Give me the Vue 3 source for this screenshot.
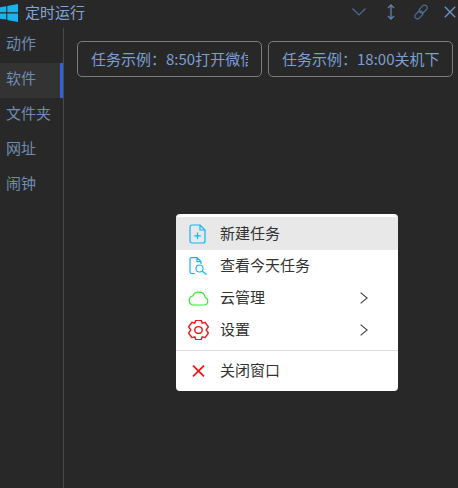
<template>
  <div class="window">
    <header class="titlebar">
      <svg class="logo" width="18" height="18" viewBox="0 0 18 18">
        <path d="M0 3.2 L6.2 2.3 V8.3 H0 Z M7.3 2.1 L18 0 V8.3 H7.3 Z M0 9.4 H6.2 V15.6 L0 14.8 Z M7.3 9.4 H18 V18 L7.3 15.9 Z" fill="#19b4f0" />
      </svg>
      <span class="title">定时运行</span>
      <div class="controls">
        <svg class="ctl chevron" width="14" height="8" viewBox="0 0 14 8" fill="none" stroke="#4f6c94" stroke-width="1.1">
          <path d="M0.5 0.5 L7 7 L13.5 0.5" />
        </svg>
        <svg class="ctl updown" width="8" height="16" viewBox="0 0 8 16" fill="none" stroke="#5f80ac" stroke-width="1.3">
          <path d="M4 1 V15 M1 4 L4 1 L7 4 M1 12 L4 15 L7 12" />
        </svg>
        <svg class="ctl link" width="16" height="16" viewBox="0 0 16 16" fill="none" stroke="#4f6c94" stroke-width="1.2">
          <rect x="7.6" y="0.6" width="5.2" height="9" rx="2.6" transform="rotate(45 10.2 5.1)" />
          <rect x="3.2" y="6.4" width="5.2" height="9" rx="2.6" transform="rotate(45 5.8 10.9)" />
        </svg>
        <svg class="ctl close" width="12" height="12" viewBox="0 0 12 12" fill="none" stroke="#6a8dbc" stroke-width="1.5">
          <path d="M0.8 0.8 L11.2 11.2 M11.2 0.8 L0.8 11.2" />
        </svg>
      </div>
    </header>

    <div class="body">
      <nav class="sidebar">
        <div
          v-for="item in navItems"
          :key="item"
          class="nav-item"
          :class="{ active: item === '软件' }"
        >{{ item }}</div>
      </nav>
      <main class="content">
        <div class="task-btn first"><span>任务示例：8:50打开微信</span></div>
        <div class="task-btn"><span>任务示例：18:00关机下</span></div>
      </main>
    </div>

    <!-- 右键菜单 -->
    <div class="menu">
      <div class="menu-row hover">
        <svg width="21" height="20" viewBox="0 0 21 20" fill="none" stroke="#12b5f5" stroke-width="1.2">
          <path d="M4 1 H12 L17 6 V17 A2 2 0 0 1 15 19 H4 A2 2 0 0 1 2 17 V3 A2 2 0 0 1 4 1 Z M12 1 V6 H17 M9.5 8.5 V15 M6.2 11.8 H12.8" />
        </svg>
        <span>新建任务</span>
      </div>
      <div class="menu-row">
        <svg width="21" height="18" viewBox="0 0 21 18" fill="none" stroke="#12b5f5" stroke-width="1.2">
          <path d="M7 16.5 H3.5 A1.5 1.5 0 0 1 2 15 V2 A1.5 1.5 0 0 1 3.5 0.6 H9 L13 4.6 V7 M9 0.6 V4.6 H13" />
          <circle cx="11.5" cy="11.5" r="3.5" />
          <path d="M14 14 L18.5 17.5" />
        </svg>
        <span>查看今天任务</span>
      </div>
      <div class="menu-row">
        <svg width="21" height="15" viewBox="0 0 21 15" fill="none" stroke="#2ff02f" stroke-width="1.2">
          <path d="M5 14 H16 A4 4 0 0 0 17 6.2 A6.2 5.6 0 0 0 5 4.8 A4.7 4.7 0 0 0 5 14 Z" />
        </svg>
        <span>云管理</span>
        <svg class="arrow" width="8" height="12" viewBox="0 0 8 12" fill="none" stroke="#444" stroke-width="1.2">
          <path d="M0.6 0.6 L7.2 6 L0.6 11.4" />
        </svg>
      </div>
      <div class="menu-row">
        <svg width="21" height="20" viewBox="1.5 1.2 17 17.6" preserveAspectRatio="none" fill="none" stroke="#f01818" stroke-width="1.2">
          <path d="M7.8 1.5 H12.2 L13 4 L15.3 3.2 L18 7.3 L16.2 9.9 L18 12.7 L15.3 16.8 L13 16 L12.2 18.5 H7.8 L7 16 L4.7 16.8 L2 12.7 L3.8 9.9 L2 7.3 L4.7 3.2 L7 4 Z" stroke-linejoin="round" />
          <circle cx="10" cy="10" r="3" />
        </svg>
        <span>设置</span>
        <svg class="arrow" width="8" height="12" viewBox="0 0 8 12" fill="none" stroke="#444" stroke-width="1.2">
          <path d="M0.6 0.6 L7.2 6 L0.6 11.4" />
        </svg>
      </div>
      <div class="divider"></div>
      <div class="menu-row">
        <svg width="21" height="12" viewBox="0 0 21 12" fill="none" stroke="#f01818" stroke-width="1.8">
          <path d="M5 0.6 L16 11.4 M16 0.6 L5 11.4" />
        </svg>
        <span>关闭窗口</span>
      </div>
    </div>
  </div>
</template>

<script setup>
const navItems = ['动作', '软件', '文件夹', '网址', '闹钟']
</script>

<style>
html,
body {
  margin: 0;
  background: #282828;
}
</style>

<style scoped>
.window {
  position: relative;
  width: 458px;
  height: 488px;
  overflow: hidden;
  background: #282828;
  font-family: "Noto Sans CJK SC", "Noto Sans", sans-serif;
  font-size: 15px;
  color: #7a9ccb;
}

.titlebar {
  display: flex;
  align-items: center;
  height: 28px;
  padding-bottom: 4px;
  box-sizing: border-box;
}

.logo {
  flex-shrink: 0;
  margin: 2px 7px 0 0;
}

.title {
  line-height: 24px;
  color: #7fa5d8;
}

.controls {
  display: flex;
  align-items: center;
  margin-left: auto;
  padding-right: 2px;
}

.updown {
  margin-left: 21px;
}

.link {
  margin-left: 18px;
}

.close {
  margin-left: 15px;
}

.body {
  display: flex;
  height: 460px;
}

.sidebar {
  width: 64px;
  box-sizing: border-box;
  border-right: 1px solid #4a4a4a;
  flex-shrink: 0;
}

.nav-item {
  height: 35px;
  line-height: 30px;
  padding-left: 6px;
  color: #6e8cb6;
}

.nav-item.active {
  background: #333333;
  box-shadow: inset -3px 0 0 #2f62e0;
}

.content {
  display: flex;
  align-items: flex-start;
  gap: 6px;
  padding: 13px 0 0 13px;
}

.task-btn {
  box-sizing: border-box;
  width: 185px;
  height: 36px;
  line-height: 33px;
  padding: 0 13px;
  border: 1px solid #7c7c7c;
  border-radius: 5px;
  white-space: nowrap;
  overflow: hidden;
  color: #7a9fd4;
}

.task-btn span {
  display: block;
  overflow: hidden;
}

.menu {
  position: absolute;
  left: 176px;
  top: 214px;
  width: 222px;
  height: 177px;
  box-sizing: border-box;
  padding-top: 3px;
  background: #ffffff;
  border-radius: 4px;
  color: #333333;
}

.menu-row {
  display: flex;
  align-items: center;
  height: 32px;
  padding-left: 12px;
  position: relative;
}

.menu-row > span {
  padding-bottom: 3px;
}

.menu-row > svg:first-child {
  width: 21px;
  margin-right: 11px;
  flex-shrink: 0;
}

.menu-row.hover {
  background: #e8e8e8;
  height: 33px;
}

.arrow {
  position: absolute;
  left: 184px;
  top: 10px;
}

.divider {
  height: 1px;
  margin: 4px 0;
  background: #dddddd;
}
</style>
